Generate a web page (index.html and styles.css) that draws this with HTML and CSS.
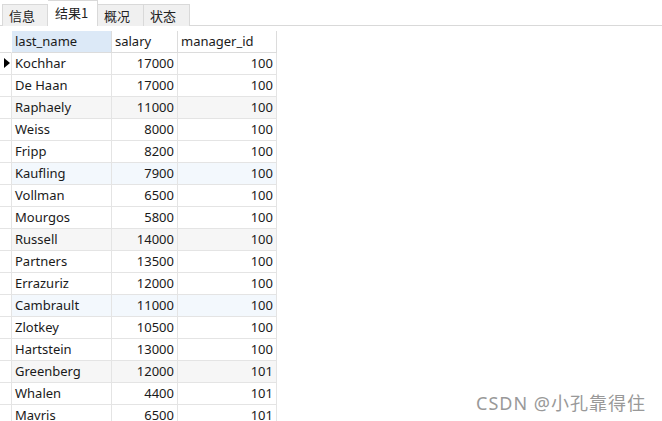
FILE: index.html
```html
<!DOCTYPE html>
<html lang="zh">
<head>
<meta charset="utf-8">
<link rel="stylesheet" href="styles.css">
</head>
<body>
<div class="tabs">
  <div class="tab">信息</div>
  <div class="tab active">结果1</div>
  <div class="tab">概况</div>
  <div class="tab">状态</div>
</div>
<div class="grid">
  <div class="row head">
    <div class="ind"></div>
    <div class="c name sel">last_name</div>
    <div class="c">salary</div>
    <div class="c">manager_id</div>
  </div>
  <div class="row"><div class="ind"><span class="arrow"></span></div><div class="c name">Kochhar</div><div class="c num">17000</div><div class="c num">100</div></div>
  <div class="row"><div class="ind"></div><div class="c name">De Haan</div><div class="c num">17000</div><div class="c num">100</div></div>
  <div class="row gray"><div class="ind"></div><div class="c name">Raphaely</div><div class="c num">11000</div><div class="c num">100</div></div>
  <div class="row"><div class="ind"></div><div class="c name">Weiss</div><div class="c num">8000</div><div class="c num">100</div></div>
  <div class="row"><div class="ind"></div><div class="c name">Fripp</div><div class="c num">8200</div><div class="c num">100</div></div>
  <div class="row blue"><div class="ind"></div><div class="c name">Kaufling</div><div class="c num">7900</div><div class="c num">100</div></div>
  <div class="row"><div class="ind"></div><div class="c name">Vollman</div><div class="c num">6500</div><div class="c num">100</div></div>
  <div class="row"><div class="ind"></div><div class="c name">Mourgos</div><div class="c num">5800</div><div class="c num">100</div></div>
  <div class="row gray"><div class="ind"></div><div class="c name">Russell</div><div class="c num">14000</div><div class="c num">100</div></div>
  <div class="row"><div class="ind"></div><div class="c name">Partners</div><div class="c num">13500</div><div class="c num">100</div></div>
  <div class="row"><div class="ind"></div><div class="c name">Errazuriz</div><div class="c num">12000</div><div class="c num">100</div></div>
  <div class="row blue"><div class="ind"></div><div class="c name">Cambrault</div><div class="c num">11000</div><div class="c num">100</div></div>
  <div class="row"><div class="ind"></div><div class="c name">Zlotkey</div><div class="c num">10500</div><div class="c num">100</div></div>
  <div class="row"><div class="ind"></div><div class="c name">Hartstein</div><div class="c num">13000</div><div class="c num">100</div></div>
  <div class="row gray"><div class="ind"></div><div class="c name">Greenberg</div><div class="c num">12000</div><div class="c num">101</div></div>
  <div class="row"><div class="ind"></div><div class="c name">Whalen</div><div class="c num">4400</div><div class="c num">101</div></div>
  <div class="row"><div class="ind"></div><div class="c name">Mavris</div><div class="c num">6500</div><div class="c num">101</div></div>
</div>
<div class="watermark">CSDN @小孔靠得住</div>
</body>
</html>
```

FILE: styles.css
```css
html, body {
  margin: 0;
  padding: 0;
  background: #ffffff;
  overflow: hidden;
}
body {
  width: 662px;
  height: 421px;
  position: relative;
  font-family: "Noto Sans", "Noto Sans CJK SC", sans-serif;
  font-size: 13px;
  color: #1a1a1a;
}
.tabs {
  display: flex;
  align-items: flex-end;
  height: 25px;
  padding-left: 2px;
  border-bottom: 1px solid #d9d9d9;
  box-sizing: content-box;
}
.tab {
  box-sizing: border-box;
  width: 46px;
  height: 22px;
  margin-bottom: -1px;
  background: #f0f0f0;
  border: 1px solid #d9d9d9;
  border-bottom: none;
  border-left: none;
  padding-left: 6px;
  line-height: 21px;
  font-family: "Noto Sans CJK SC", sans-serif;
  font-size: 13px;
  color: #222;
}
.tab:first-child {
  border-left: 1px solid #d9d9d9;
}
.tab.active {
  width: 50px;
  height: 26px;
  background: #ffffff;
  border-top: 1px solid #d9d9d9;
  line-height: 24px;
  padding-left: 7px;
}
.grid {
  margin-top: 5px;
  width: 277px;
}
.row {
  display: grid;
  grid-template-columns: 12px 100px 66px 99px;
  height: 22px;
}
.row > div {
  box-sizing: border-box;
  border-right: 1px solid #e4e4e4;
  border-bottom: 1px solid #e4e4e4;
  height: 22px;
  line-height: 21px;
  white-space: nowrap;
  overflow: hidden;
}
.row.head > div {
  border-right-color: #dcdcdc;
  border-bottom-color: #dcdcdc;
}
.row.head .ind {
  border-right-color: transparent;
}
.c {
  padding: 0 3px;
}
.name {
  padding-left: 3px;
}
.num {
  text-align: right;
}
.sel {
  background: #dce9f7;
}
.row.gray > div:not(.ind) {
  background: #f6f6f6;
}
.row.blue > div:not(.ind) {
  background: #f3f8fd;
}
.ind {
  position: relative;
}
.arrow {
  position: absolute;
  left: 4px;
  top: 5px;
  width: 0;
  height: 0;
  border-top: 5px solid transparent;
  border-bottom: 5px solid transparent;
  border-left: 6px solid #000;
}
.watermark {
  position: absolute;
  left: 476px;
  top: 389px;
  font-family: "Noto Sans", "Noto Sans CJK SC", sans-serif;
  font-size: 18px;
  letter-spacing: 1px;
  color: #999999;
}
```
